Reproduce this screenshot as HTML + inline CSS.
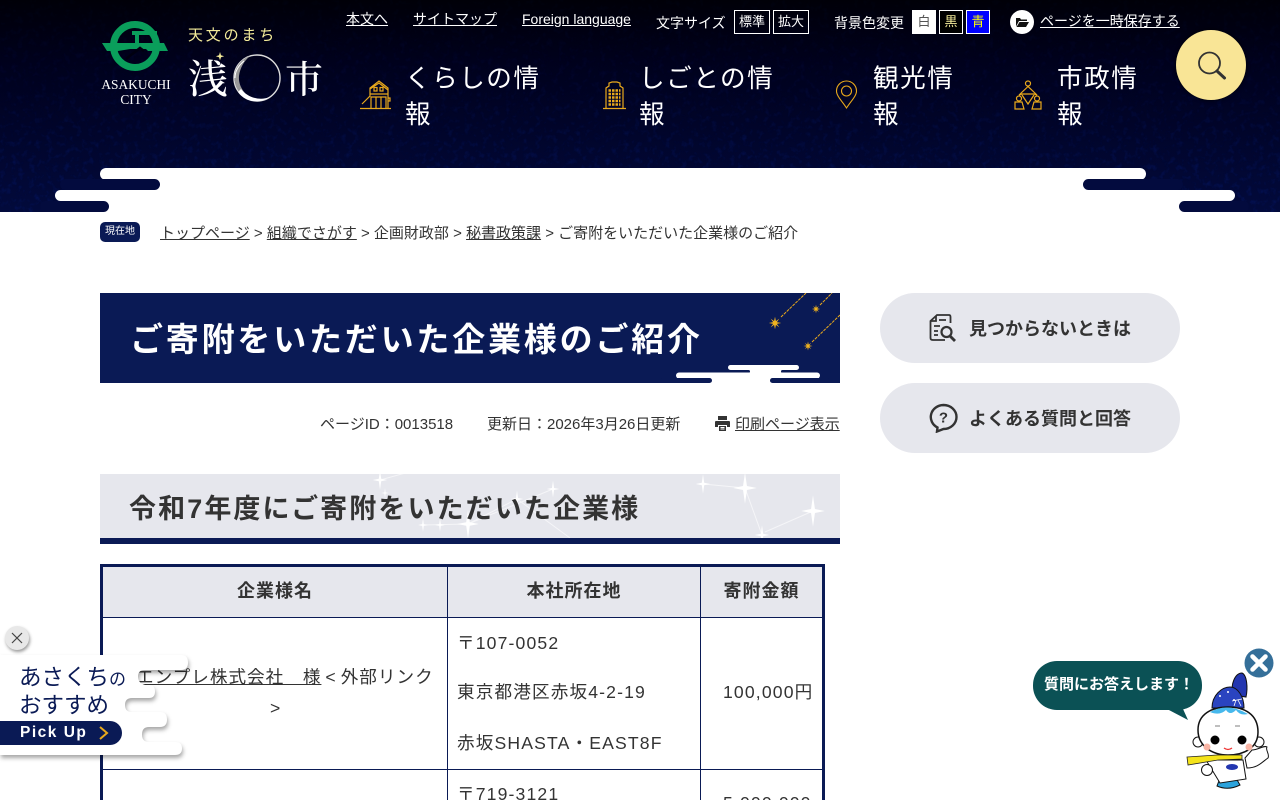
<!DOCTYPE html>
<html lang="ja"><head><meta charset="utf-8"><title>ご寄附をいただいた企業様のご紹介</title>
<style>
*{box-sizing:border-box}
html,body{margin:0;padding:0;width:1280px;height:800px;overflow:hidden;background:#fff}
body{font-family:"Liberation Sans","Noto Sans CJK JP",sans-serif;color:#333;position:relative}
.a{position:absolute;white-space:nowrap}
a{color:inherit}
#hd{position:absolute;left:0;top:0;width:1280px;height:212px;background:linear-gradient(180deg,#000008 0,#00011c 60px,#010428 120px,#020a3c 212px);overflow:hidden}
.nav{font-size:25.6px;line-height:36px;letter-spacing:1.5px;color:#fff;white-space:normal}
.tb{border:1px solid #fff;color:#fff;font-size:13px;height:24px;line-height:22px;text-align:center;top:10px}
.side{left:880px;width:300px;height:70px;border-radius:35px;background:#e6e7ed;font-size:18px;font-weight:700;color:#333}
#tbl{position:absolute;left:100px;top:564px;width:725px;height:260px;border:3px solid #0a1a55;background:#fff}
.cell{position:absolute}
.t{font-size:17.6px;letter-spacing:1.15px;color:#333}
.th{font-size:18px;font-weight:700;letter-spacing:1px;text-align:center;color:#333}
</style></head><body>
<div id="hd">
<svg class="a" style="left:0;top:0" width="1280" height="212">
<defs><filter id="n" x="0" y="0" width="100%" height="100%" color-interpolation-filters="sRGB"><feTurbulence type="fractalNoise" baseFrequency=".17" numOctaves="3" seed="9"/><feColorMatrix values="0 0 0 0 .03  0 0 0 0 .12  0 0 0 0 .5  2 0 0 0 -1"/></filter>
<linearGradient id="gm" x1="0" y1="0" x2="0" y2="1"><stop offset="0" stop-color="#111"/><stop offset=".4" stop-color="#333"/><stop offset="1" stop-color="#888"/></linearGradient>
<mask id="mk"><rect width="1280" height="212" fill="url(#gm)"/></mask></defs>
<g mask="url(#mk)"><rect width="1280" height="212" filter="url(#n)"/></g>
</svg>
<!-- logo -->
<svg class="a" style="left:100px;top:18px" width="72" height="56" viewBox="0 0 72 56">
<circle cx="35" cy="28" r="21.500" fill="none" stroke="#0a9e5b" stroke-width="7"/>
<path d="M2 25H64L68 33H48L46 31H30L18 33H7Z" fill="#0a9e5b"/>
<path d="M32 15H57" stroke="#0a9e5b" stroke-width="4" fill="none"/>
<path d="M37 15V25" stroke="#0a9e5b" stroke-width="4" fill="none"/>
<path d="M44 33L40 30 26 41" stroke="#000010" stroke-width="2.500" fill="none"/>
</svg>
<div class="a" style="left:91px;top:77px;width:90px;text-align:center;font-family:'Liberation Serif',serif;font-size:13.400px;line-height:15px;color:#fff">ASAKUCHI<br>CITY</div>
<div class="a" style="left:188px;top:27px;font-size:15px;line-height:18px;letter-spacing:2.800px;color:#f4ec9a">天文のまち</div>
<div class="a" style="left:188px;top:52px;font-family:'Noto Serif CJK SC','Noto Sans CJK JP',serif;font-size:40px;line-height:50px;color:#fff;font-weight:500">浅</div>
<div class="a" style="left:285px;top:52px;font-family:'Noto Serif CJK SC','Noto Sans CJK JP',serif;font-size:38px;line-height:50px;color:#fff;font-weight:500">市</div>
<svg class="a" style="left:210px;top:50px" width="76" height="56" viewBox="0 0 76 56">
<circle cx="47" cy="28" r="23" fill="none" stroke="#ddd" stroke-width="1.400"/>
<path d="M40 6C28 10 23 22 25 32 27 44 38 52 47 51 36 47 28 37 29 26 30 18 34 11 40 6Z" fill="#999"/>
<path d="M28 42C34 51 48 55 60 47 50 51 38 48 31 39Z" fill="#fff"/>
<path d="M34 11C28 16 25 22 25 28" stroke="#fff" stroke-width="1" fill="none"/>
<path d="M10 2l1 3.200 3.200 1-3.200 1-1 3.200-1-3.200-3.200-1 3.200-1Z" fill="#f4ec9a"/>
</svg>
<div class="a" style="left:346px;top:10px;font-size:14px;line-height:18px;color:#fff"><a href="#">本文へ</a></div>
<div class="a" style="left:413px;top:10px;font-size:14px;line-height:18px;color:#fff"><a href="#">サイトマップ</a></div>
<div class="a" style="left:522px;top:10px;font-size:14px;line-height:18px;color:#fff"><a href="#">Foreign language</a></div>
<div class="a" style="left:656px;top:13px;font-size:14px;line-height:20px;color:#fff">文字サイズ</div>
<div class="a tb" style="left:734px;width:36px">標準</div>
<div class="a tb" style="left:773px;width:36px">拡大</div>
<div class="a" style="left:834px;top:13px;font-size:14px;line-height:20px;color:#fff">背景色変更</div>
<div class="a tb" style="left:912px;width:24px;background:#fff;color:#555;border-color:#fff">白</div>
<div class="a tb" style="left:939px;width:24px;background:#000;color:#f4ec9a">黒</div>
<div class="a tb" style="left:966px;width:24px;background:#00f;color:#ff0">青</div>
<svg class="a" style="left:1010px;top:10px" width="24" height="24" viewBox="0 0 24 24"><circle cx="12" cy="12" r="12" fill="#fff"/><path d="M6 16.500V8h4l1 1.500h6V11H9L6 16.500ZM9.500 12H19l-3 5H6.500Z" fill="#111"/></svg>
<div class="a" style="left:1040px;top:12px;font-size:14px;line-height:18px;color:#fff"><a href="#">ページを一時保存する</a></div>
<!-- nav -->
<svg class="a" style="left:360px;top:80px" width="32" height="30" viewBox="0 0 32 30" fill="none" stroke="#e9a91c" stroke-width="1.200">
<path d="M0 28.500H31M2 24L10 16V8L19 1 28 8V28.500M10 9L19 3 28 10M10 14H28M11 28.500V17H26V28.500M16 17V28.500M21 17V28.500"/><rect x="14" y="7.500" width="3" height="3.500"/><rect x="20" y="7.500" width="3" height="3.500"/><path d="M28 18h2v3h-2"/>
</svg>
<div class="a nav" style="left:405px;top:61px;width:150px">くらしの情報</div>
<svg class="a" style="left:603px;top:81px" width="24" height="29" viewBox="0 0 24 29" fill="none" stroke="#e9a91c" stroke-width="1.200">
<path d="M0 27.500H23M3 27.500V7L6 5V2L9 1H14L17 2V5L20 7V27.500"/><path d="M5.500 9.500h12M5.500 13h12M5.500 16.500h12M5.500 20h12M5.500 23.500h12" stroke-dasharray="2.500 1" stroke-width="2.500"/>
</svg>
<div class="a nav" style="left:639px;top:61px;width:150px">しごとの情報</div>
<svg class="a" style="left:835px;top:80px" width="24" height="30" viewBox="0 0 24 30" fill="none" stroke="#e9a91c" stroke-width="1.100">
<path d="M11.500 28C7 21 1.500 16 1.500 11A10 10 0 0 1 21.500 11C21.500 16 16 21 11.500 28Z"/><circle cx="11.500" cy="11" r="5"/>
</svg>
<div class="a nav" style="left:873px;top:61px;width:100px">観光情報</div>
<svg class="a" style="left:1014px;top:80px" width="30" height="30" viewBox="0 0 30 30" fill="none" stroke="#e9a91c" stroke-width="1.200">
<circle cx="14" cy="3.500" r="2.500"/><path d="M14 6.500L5 15 8 14H20L23 15Z"/><circle cx="5" cy="18.500" r="2.500"/><circle cx="23" cy="18.500" r="2.500"/><path d="M1 29V22H8L10 29ZM18 29L20 22H27V29ZM8 15L14 24 20 15"/>
</svg>
<div class="a nav" style="left:1057px;top:61px;width:90px">市政情報</div>
<!-- clouds -->
<div class="a" style="left:100px;top:168px;width:1046px;height:12px;background:#fff;border-radius:6px"></div>
<div class="a" style="left:130px;top:174px;width:980px;height:20px;background:#fff"></div>
<div class="a" style="left:60px;top:179px;width:100px;height:11px;background:#030b3e;border-radius:6px"></div>
<div class="a" style="left:1083px;top:179px;width:100px;height:11px;background:#030b3e;border-radius:6px"></div>
<div class="a" style="left:55px;top:190px;width:1180px;height:11px;background:#fff;border-radius:6px"></div>
<div class="a" style="left:90px;top:195px;width:1110px;height:17px;background:#fff"></div>
<div class="a" style="left:40px;top:201px;width:69px;height:11px;background:#030b3e;border-radius:6px"></div>
<div class="a" style="left:1179px;top:201px;width:70px;height:11px;background:#030b3e;border-radius:6px"></div>
</div>
<!-- search -->
<div class="a" style="left:1176px;top:30px;width:70px;height:70px;border-radius:50%;background:#f9e596;box-shadow:0 0 3px 1px rgba(0,0,0,.6)"></div>
<svg class="a" style="left:1196px;top:50px" width="32" height="32" viewBox="0 0 32 32" fill="none" stroke="#333"><circle cx="13.500" cy="13" r="10.500" stroke-width="1.800"/><path d="M21 21L28.500 28" stroke-width="3" stroke-linecap="round"/></svg>
<!-- breadcrumb -->
<div class="a" style="left:100px;top:222px;width:40px;height:20px;border-radius:5px;background:#0a1a55;color:#fff;font-size:10px;line-height:20px;text-align:center">現在地</div>
<div class="a" style="left:160px;top:224px;font-size:15px;line-height:20px;color:#333"><a href="#">トップページ</a> &gt; <a href="#">組織でさがす</a> &gt; 企画財政部 &gt; <a href="#">秘書政策課</a> &gt; ご寄附をいただいた企業様のご紹介</div>
<!-- h1 -->
<div class="a" style="left:100px;top:293px;width:740px;height:90px;background:#0a1a55;overflow:hidden">
<div class="a" style="left:30px;top:24px;font-size:33px;line-height:46px;font-weight:700;letter-spacing:2.800px;color:#fff">ご寄附をいただいた企業様のご紹介</div>
<svg class="a" style="left:0;top:0" width="740" height="90">
<defs><path id="st" d="M0-10L1.500-3 7-7 3-1.500 10 0 3 1.500 7 7 1.500 3 0 10-1.500 3-7 7-3 1.500-10 0-3-1.500-7-7-1.500-3Z" fill="#f2b41f"/></defs>
<g stroke="#e9a91c" stroke-width="1" stroke-dasharray="3 1" fill="none"><path d="M681 24L706 0M720 12L732 0M712 49L740 22"/></g>
<use href="#st" transform="translate(675 30) scale(.62)"/>
<use href="#st" transform="translate(716 16) scale(.42)"/>
<use href="#st" transform="translate(708 53) scale(.45)"/>
<rect x="628" y="72" width="71" height="5" rx="2.500" fill="#fff"/>
<rect x="640" y="74" width="50" height="8" fill="#fff"/>
<rect x="600" y="77" width="50" height="3" rx="1.500" fill="#0a1a55"/>
<rect x="681" y="77" width="50" height="3" rx="1.500" fill="#0a1a55"/>
<rect x="576" y="79.500" width="144" height="6" rx="3" fill="#fff"/>
<rect x="595" y="83" width="90" height="7" fill="#fff"/>
<rect x="560" y="85" width="52" height="5" rx="2.500" fill="#0a1a55"/>
<rect x="670" y="85" width="60" height="5" rx="2.500" fill="#0a1a55"/>
</svg>
</div>
<!-- meta -->
<div class="a" style="left:320px;top:415px;font-size:15px;line-height:20px;color:#333">ページID：0013518</div>
<div class="a" style="left:487px;top:415px;font-size:15px;line-height:20px;color:#333">更新日：2026年3月26日更新</div>
<svg class="a" style="left:715px;top:416px" width="15" height="15" viewBox="0 0 15 15"><path d="M3 0H12V4H3ZM1 5H14A1 1 0 0 1 15 6V11H12V9H3V11H0V6A1 1 0 0 1 1 5ZM4 10H11V15H4Z" fill="#333"/><path d="M5.500 11.500H9.500M5.500 13H9.500" stroke="#fff"/></svg>
<div class="a" style="left:735px;top:415px;font-size:15px;line-height:20px;color:#333"><a href="#">印刷ページ表示</a></div>
<!-- h2 -->
<div class="a" style="left:100px;top:474px;width:740px;height:70px;background:#e6e7ed;border-bottom:6px solid #0a1a55;overflow:hidden">
<svg class="a" style="left:0;top:0" width="740" height="64" fill="none" stroke="#fff" stroke-width="1">
<defs><path id="sp" d="M0-12L1.500-1.500 9 0 1.500 1.500 0 12-1.500 1.500-9 0-1.500-1.500Z" fill="#fff" stroke="none"/></defs>
<path d="M280 6L309-2M323 51L368 50 453 15M368 50L417 25 470 64M603 10L645 14 662 61M665 58L713 37" stroke-opacity=".6"/>
<use href="#sp" transform="translate(280 6) scale(.8)"/>
<use href="#sp" transform="translate(285 19) scale(.4)"/>
<use href="#sp" transform="translate(453 15) scale(.7)"/>
<use href="#sp" transform="translate(323 51) scale(.55)"/>
<use href="#sp" transform="translate(340 51) scale(.55)"/>
<use href="#sp" transform="translate(368 50) scale(1.200)"/>
<use href="#sp" transform="translate(417 25) scale(.7)"/>
<use href="#sp" transform="translate(603 10) scale(.8)"/>
<use href="#sp" transform="translate(645 14) scale(1.300)"/>
<use href="#sp" transform="translate(713 37) scale(1.300)"/>
<use href="#sp" transform="translate(662 61) scale(.8)"/>
</svg>
<div class="a" style="left:29px;top:15px;font-size:27px;line-height:40px;font-weight:700;letter-spacing:2.100px;color:#333">令和7年度にご寄附をいただいた企業様</div>
</div>
<!-- table -->
<div id="tbl">
<div class="cell" style="left:0;top:0;width:719px;height:50px;background:#e6e7ed"></div>
<div class="cell" style="left:344px;top:0;width:1px;height:260px;background:#0a1a55"></div>
<div class="cell" style="left:597px;top:0;width:1px;height:260px;background:#0a1a55"></div>
<div class="cell" style="left:0;top:50px;width:719px;height:1px;background:#0a1a55"></div>
<div class="cell" style="left:0;top:202px;width:719px;height:1px;background:#0a1a55"></div>
<div class="a th" style="left:0;top:11px;width:344px;line-height:26px">企業様名</div>
<div class="a th" style="left:345px;top:11px;width:252px;line-height:26px">本社所在地</div>
<div class="a th" style="left:598px;top:11px;width:121px;line-height:26px">寄附金額</div>
<div class="a t" style="left:33px;top:97px;line-height:26px;letter-spacing:1px"><a href="#">エンプレ株式会社　様</a><span style="margin-left:4px">&lt;</span><span style="margin-left:4px">外部リンク</span></div>
<div class="a t" style="left:167px;top:128px;line-height:26px">&gt;</div>
<div class="a t" style="left:354px;top:64px;line-height:25px">〒107-0052</div>
<div class="a t" style="left:354px;top:113px;line-height:25px">東京都港区赤坂4-2-19</div>
<div class="a t" style="left:354px;top:164px;line-height:25px">赤坂SHASTA・EAST8F</div>
<div class="a t" style="left:620px;top:113px;line-height:25px">100,000円</div>
<div class="a t" style="left:354px;top:215px;line-height:25px">〒719-3121</div>
<div class="a t" style="left:620px;top:224px;line-height:25px">5,000,000</div>
</div>
<!-- side -->
<div class="a side" style="top:293px"><span class="a" style="left:89px;top:24px;line-height:25px">見つからないときは</span>
<svg class="a" style="left:49px;top:20px" width="28" height="30" viewBox="0 0 28 30" fill="none" stroke="#333" stroke-width="1.800"><path d="M16 27H4Q1.500 27 1.500 25V8L8 2H20Q21.500 2 21.500 4V10"/><path d="M7 3V8H2M10 7H17M5 13H11M5 18H9M5 22H9"/><circle cx="17.500" cy="19" r="5" stroke-width="2.200"/><path d="M21 23L26 28" stroke-width="2.800"/></svg></div>
<div class="a side" style="top:383px"><span class="a" style="left:89px;top:24px;line-height:25px">よくある質問と回答</span>
<svg class="a" style="left:49px;top:20px" width="30" height="30" viewBox="0 0 30 30" fill="none" stroke="#333" stroke-width="2.400"><path d="M14.500 2A13 12 0 0 1 14.500 26L8 28.500 8.500 24.500A13 12 0 0 1 14.500 2Z"/><text x="14.500" y="19.500" text-anchor="middle" font-family="Liberation Sans" font-size="15" font-weight="700" fill="#333" stroke="none">?</text></svg></div>
<!-- pickup -->
<svg class="a" style="left:0;top:655px;filter:drop-shadow(1px 3px 2px rgba(0,0,0,.35))" width="195" height="105" viewBox="0 0 195 105"><path d="M0 0H181Q188 0 188 7.500 188 15 181 15H145Q138 15 138 21.500 138 28 145 30H149Q155 30 155 36.500 155 43 149 43H132Q125 43 125 50 125 57 132 57H160Q167 57 167 64.500 167 72 160 72H149Q142 72 142 79.500 142 87 149 87H175Q182 87 182 93.500 182 100 175 100H0Z" fill="#fff"/></svg>
<div class="a" style="left:19px;top:663px;font-size:22.500px;line-height:27px;font-family:'Noto Sans CJK JP',sans-serif;color:#0a1a55">あさくち<span style="font-size:17px">の</span><br>おすすめ</div>
<div class="a" style="left:0;top:721px;width:122px;height:24px;background:#0a1a55;border-radius:0 12px 12px 0"></div>
<div class="a" style="left:20px;top:722px;font-size:15.500px;line-height:22px;font-weight:700;letter-spacing:1.500px;color:#fff">Pick Up</div>
<svg class="a" style="left:98px;top:726px" width="12" height="14" viewBox="0 0 12 14" fill="none" stroke="#e9a91c" stroke-width="2"><path d="M2 1L9 7 2 13"/></svg>
<div class="a" style="left:5px;top:626px;width:24px;height:24px;border-radius:50%;background:#e8e8e8;box-shadow:1px 2px 3px rgba(0,0,0,.4)"></div>
<svg class="a" style="left:11px;top:632px" width="12" height="12" fill="none" stroke="#444" stroke-width="1.200"><path d="M1 1L11 11M11 1L1 11"/></svg>
<!-- chatbot -->
<div class="a" style="left:1033px;top:661px;width:169px;height:49px;border-radius:24px;background:#0b5155;color:#fff;font-size:15px;font-weight:700;line-height:48px;text-align:center;padding-left:3px">質問にお答えします！</div>
<svg class="a" style="left:1160px;top:700px" width="32" height="22"><path d="M7 9H23L28 20Z" fill="#0b5155"/></svg>
<svg class="a" style="left:1244px;top:648px" width="30" height="30"><circle cx="15" cy="15" r="14.500" fill="#356f99"/><path d="M8.500 8.500L21.500 21.500M21.500 8.500L8.500 21.500" stroke="#fff" stroke-width="4.500" stroke-linecap="round"/></svg>
<svg class="a" style="left:1180px;top:670px" width="95" height="125" viewBox="0 0 95 125">
<path d="M53 25C50 15 55 3 62 3 67 5 68 18 66 27Z" fill="#2336b0" stroke="#111"/>
<path d="M32 38C32 25 42 17 50 17 58 17 64 27 64 38Z" fill="#2a44c0" stroke="#111"/>
<g fill="#fff"><circle cx="40" cy="26" r="1"/><circle cx="48" cy="22" r="1"/><circle cx="54" cy="30" r="1"/></g><path d="M52 31L62 29M56 30L54 36M58 30L61 36" stroke="#fff" stroke-width=".8"/>
<path d="M40 108L37 116Q48 121 60 115L56 108Z" fill="#2ba3dc" stroke="#111"/>
<path d="M26 90H63L66 109 40 113Z" fill="#fff" stroke="#111"/>
<ellipse cx="52" cy="97" rx="6" ry="3" fill="#2336b0"/>
<circle cx="18" cy="72" r="5" fill="#fff" stroke="#111"/><circle cx="79" cy="72" r="5" fill="#fff" stroke="#111"/>
<path d="M18 60C18 44 32 37 48 37 64 37 78 44 78 62 78 78 64 85 48 85 32 85 18 76 18 60Z" fill="#fff" stroke="#111" stroke-width="1.500"/>
<path d="M30 42Q48 32 68 44 60 46 56 40 50 46 46 40 40 46 30 42Z" fill="#46b8ec"/>
<path d="M35 56h5M55 56h5" stroke="#aaa" stroke-width="1.500"/>
<circle cx="35" cy="70" r="4.500" fill="#000"/><circle cx="62" cy="70" r="4.500" fill="#000"/>
<circle cx="27" cy="77" r="3.500" fill="#f9b5a5"/><circle cx="69" cy="77" r="3.500" fill="#f9b5a5"/>
<path d="M44 78Q48 81 52 78" stroke="#e33" stroke-width="1.300" fill="none"/>
<path d="M7 87L37 85 62 85V89L38 90 8 95Z" fill="#f4e31a" stroke="#222" stroke-width=".8"/>
<path d="M65 88L72 80C78 80 84 75 87 77 85 80 90 84 88 88 82 92 78 98 67 98Z" fill="#fff" stroke="#111"/>
<circle cx="27" cy="100" r="5.500" fill="#fff" stroke="#111"/>
</svg>
</body></html>
